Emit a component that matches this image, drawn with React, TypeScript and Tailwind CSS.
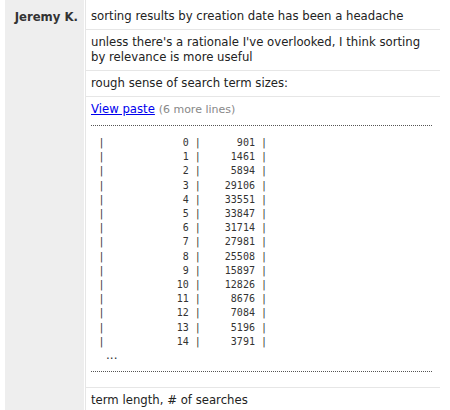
const sizes = [
  901, 1461, 5894, 29106, 33551, 33847, 31714, 27981, 25508, 15897, 12826, 8676, 7084, 5196, 3791,
];

const pasteLines = sizes.map(
  (n, i) => "|" + String(i).padStart(14) + " |" + String(n).padStart(9) + " |"
);

export default function App() {
  return (
    <main className="h-[410px] overflow-hidden bg-white pl-[5px] text-[11.7px] text-[#222] font-['DejaVu_Sans',sans-serif]">
      <div className="flex h-full">
        {/* NICK COLUMN */}
        <div className="w-[79px] shrink-0 bg-[#eeeeee] pr-[6px] pt-[9px] text-right">
          <span className="font-bold text-[#333] leading-[15px]">Jeremy K.</span>
        </div>

        {/* MESSAGES */}
        <div className="ml-px w-[355px] border-l border-[#e6e6e6]">
          <div className="border-b border-[#e6e6e6] pl-[5px] pr-[4px] pt-[9px] pb-[5px] leading-[15px]">
            sorting results by creation date has been a headache
          </div>
          <div className="border-b border-[#e6e6e6] pl-[5px] pr-[4px] py-[5px] leading-[15px]">
            unless there's a rationale I've overlooked, I think sorting by relevance is more useful
          </div>
          <div className="border-b border-[#e6e6e6] pl-[5px] pr-[4px] py-[5px] leading-[15px]">
            rough sense of search term sizes:
          </div>
          <div className="border-b border-[#e6e6e6] pl-[5px] pr-[4px] pt-[5px] pb-[5px]">
            <div className="leading-[15px]">
              <a href="#" className="text-[#0000ee] underline">
                View paste
              </a>{" "}
              <span className="text-[11px] text-[#888]">(6 more lines)</span>
            </div>
            <div className="mt-[8px] mb-[10px] mr-[4px] border-y border-dotted border-[#555]">
              <pre className="pl-[7.4px] pt-[10px] text-[10px] leading-[14.2px] text-[#333] font-['DejaVu_Sans_Mono',monospace]">
                {pasteLines.join("\n")}
              </pre>
              <div className="pl-[15px] pb-[10px] text-[12px] leading-[12px] text-[#333]">...</div>
            </div>
          </div>
          <div className="pl-[5px] pr-[4px] py-[5px] leading-[15px]">term length, # of searches</div>
        </div>
      </div>
    </main>
  );
}
